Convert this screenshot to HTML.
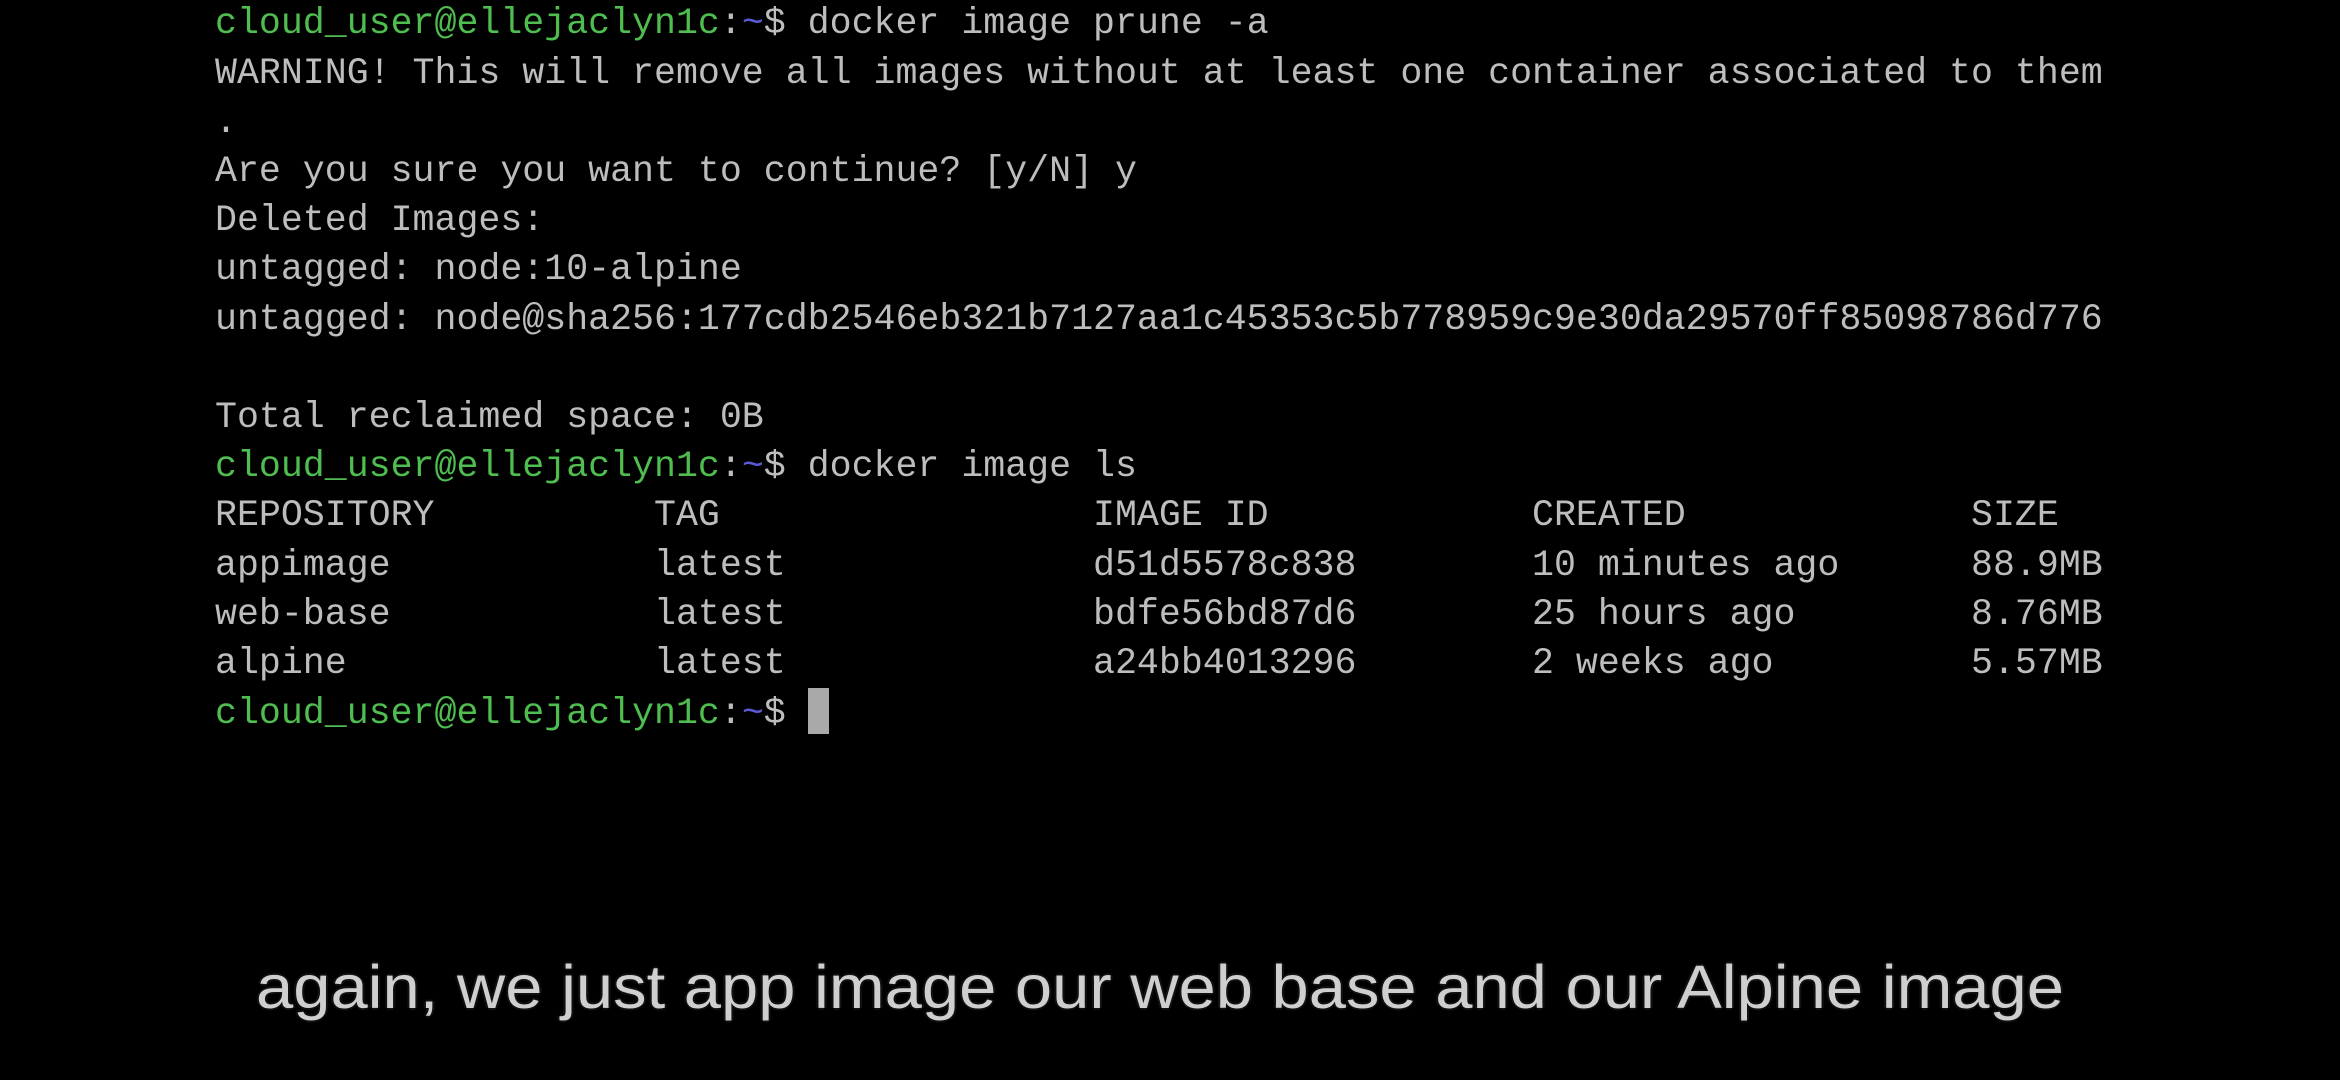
<!DOCTYPE html>
<html><head><meta charset="utf-8"><style>
html,body{margin:0;padding:0;background:#000;width:2340px;height:1080px;overflow:hidden}
#t{position:absolute;left:215px;top:-0.6px;font-family:"Liberation Mono",monospace;font-size:36.6px;line-height:49.2px;color:#bdbdbd;white-space:pre}
.g{color:#4fbd4f}.b{color:#5a5ad6}
.cur{display:inline-block;width:21px;height:46px;background:#a9a9a9;vertical-align:-11px}
#s{position:absolute;left:-10px;width:2340px;top:952px;text-align:center;font-family:"Liberation Sans",sans-serif;font-size:61px;color:#cfcfcf;text-shadow:-2px 0 #111,2px 0 #111,0 -2px #111,0 2px #111;white-space:nowrap;transform:scaleX(1.097);transform-origin:1170px 0}
</style></head><body>
<div id="t"><span class="g">cloud_user@ellejaclyn1c</span>:<span class="b">~</span>$ docker image prune -a
WARNING! This will remove all images without at least one container associated to them
.
Are you sure you want to continue? [y/N] y
Deleted Images:
untagged: node:10-alpine
untagged: node@sha256:177cdb2546eb321b7127aa1c45353c5b778959c9e30da29570ff85098786d776

Total reclaimed space: 0B
<span class="g">cloud_user@ellejaclyn1c</span>:<span class="b">~</span>$ docker image ls
REPOSITORY          TAG                 IMAGE ID            CREATED             SIZE
appimage            latest              d51d5578c838        10 minutes ago      88.9MB
web-base            latest              bdfe56bd87d6        25 hours ago        8.76MB
alpine              latest              a24bb4013296        2 weeks ago         5.57MB
<span class="g">cloud_user@ellejaclyn1c</span>:<span class="b">~</span>$ <span class="cur"></span></div>
<div id="s">again, we just app image our web base and our Alpine image</div>
</body></html>
